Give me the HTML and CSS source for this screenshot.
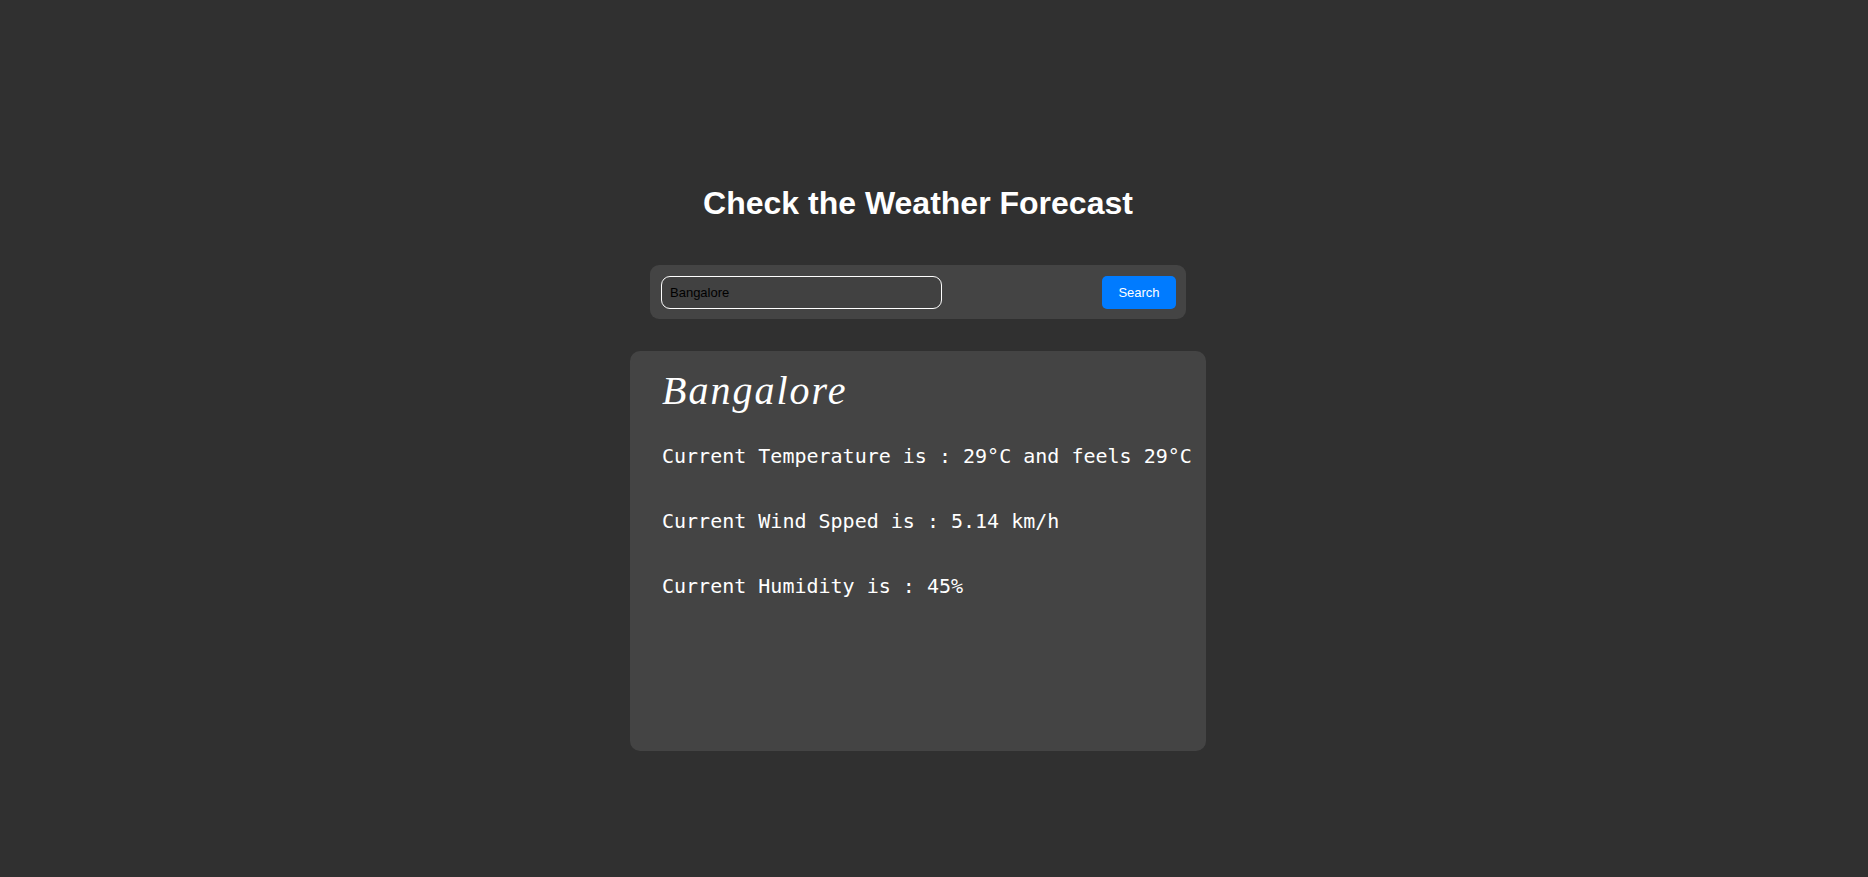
FILE: index.html
```html
<!DOCTYPE html>
<html lang="en">
<head>
<meta charset="utf-8">
<title>Weather Forecast</title>
<link rel="stylesheet" href="styles.css">
</head>
<body>
<main class="page">
  <h1 class="title">Check the Weather Forecast</h1>
  <form class="search-bar">
    <input class="search-input" type="text" value="Bangalore">
    <button class="search-btn" type="button">Search</button>
  </form>
  <section class="card">
    <h2 class="city">Bangalore</h2>
    <p class="info">Current Temperature is : 29°C and feels 29°C</p>
    <p class="info">Current Wind Spped is : 5.14 km/h</p>
    <p class="info">Current Humidity is : 45%</p>
  </section>
</main>
</body>
</html>
```

FILE: styles.css
```css
html, body {
  margin: 0;
  padding: 0;
  background: #303030;
  height: 100%;
}

.page {
  display: flex;
  flex-direction: column;
  align-items: center;
  padding: 185px 32px 0 0;
  box-sizing: border-box;
}

.title {
  margin: 0 0 43px;
  font-family: "Liberation Sans", Arial, sans-serif;
  font-size: 32px;
  line-height: 37px;
  font-weight: bold;
  color: #ffffff;
}

.search-bar {
  display: flex;
  justify-content: space-between;
  align-items: center;
  box-sizing: border-box;
  width: 536px;
  height: 54px;
  padding: 11px 10px 10px 11px;
  margin: 0 0 32px;
  background: #444444;
  border-radius: 9px;
}

.search-input {
  box-sizing: border-box;
  width: 281px;
  height: 33px;
  padding: 0 8px;
  border: 1px solid #ffffff;
  border-radius: 9px;
  background: #414141;
  color: #000000;
  font-family: "Liberation Sans", Arial, sans-serif;
  font-size: 13px;
  outline: none;
}

.search-btn {
  box-sizing: border-box;
  width: 74px;
  height: 33px;
  border: none;
  border-radius: 5px;
  background: #007bff;
  color: #ffffff;
  font-family: "Liberation Sans", Arial, sans-serif;
  font-size: 13px;
  padding: 0;
}

.card {
  box-sizing: border-box;
  width: 576px;
  height: 400px;
  padding: 16px 32px;
  background: #444444;
  border-radius: 10px;
}

.city {
  margin: 0 0 29px;
  font-family: "Liberation Serif", "Times New Roman", serif;
  font-style: italic;
  font-weight: normal;
  font-size: 40px;
  letter-spacing: 2px;
  line-height: 48px;
  color: #ffffff;
}

.info {
  margin: 0 0 41px;
  font-family: "DejaVu Sans Mono", monospace;
  font-size: 20px;
  line-height: 24px;
  color: #ffffff;
  white-space: nowrap;
}
```
